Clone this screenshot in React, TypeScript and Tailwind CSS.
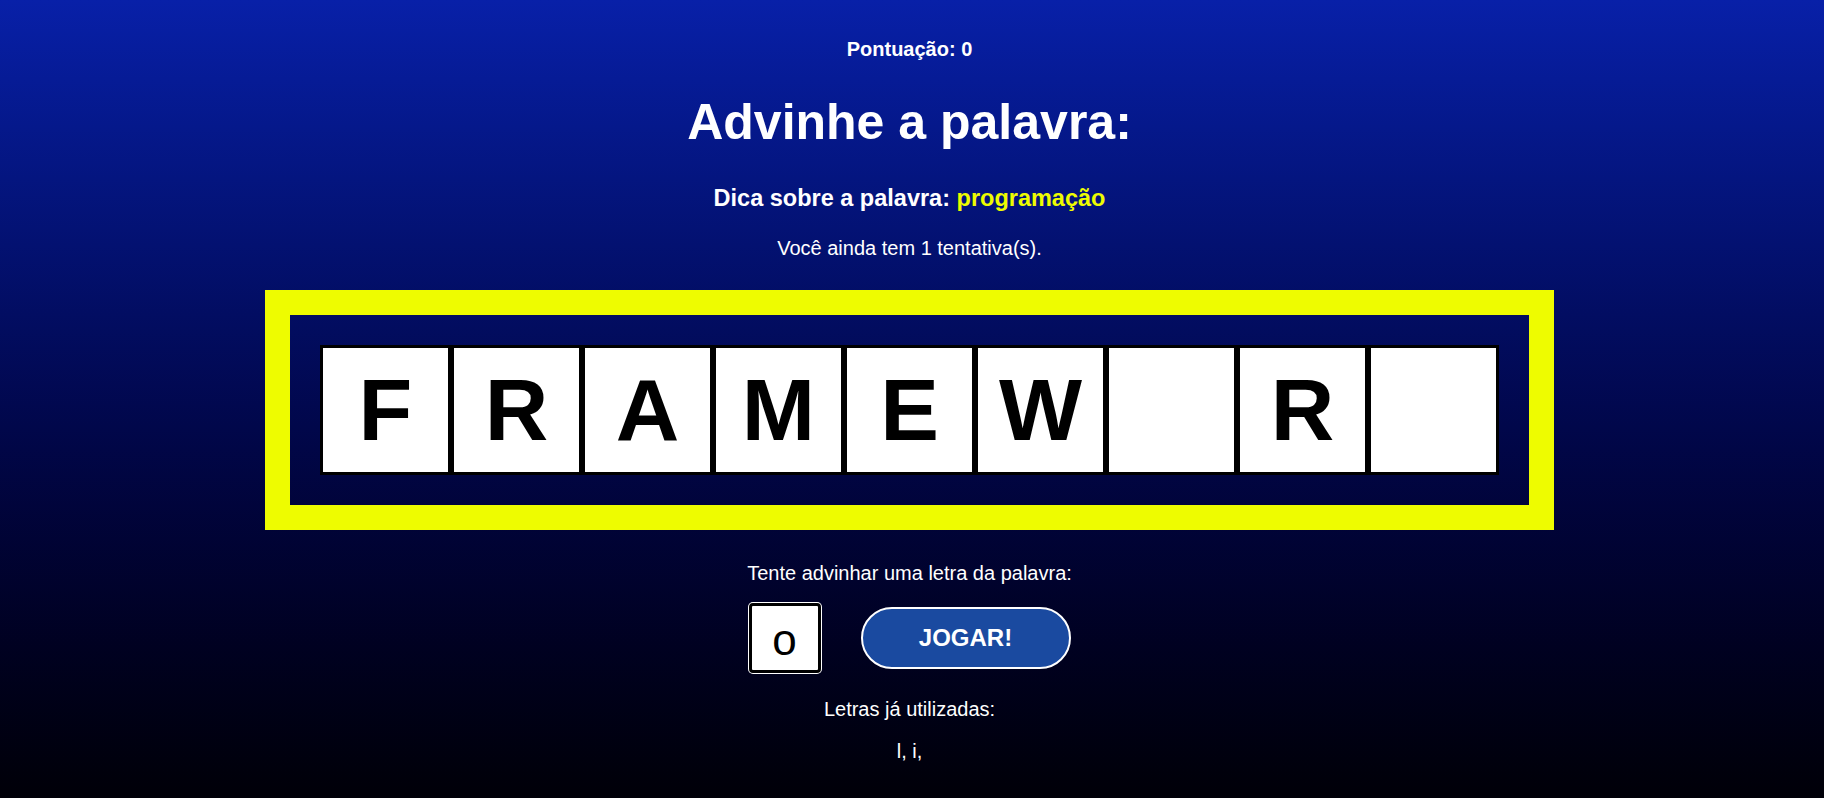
import { useState } from "react";

const word = ["F", "R", "A", "M", "E", "W", "", "R", ""];

export default function App() {
  const [guess, setGuess] = useState("o");
  const used = ["l", "i"];

  return (
    <div
      className="min-h-screen h-[798px] bg-linear-to-b from-[#0820a8] to-[#000008] text-white flex flex-col items-center pr-[5px] overflow-hidden"
      style={{ fontFamily: '"Liberation Sans", Arial, sans-serif' }}
    >
      {/* pontuação */}
      <p className="mt-[39px] text-[20px] leading-none font-bold">Pontuação: 0</p>

      <h1 className="mt-[38px] text-[50px] leading-none font-bold">Advinhe a palavra:</h1>

      <p className="mt-[40px] text-[23.5px] leading-none font-bold">
        Dica sobre a palavra: <span className="text-[#eefc00]">programação</span>
      </p>

      <p className="mt-[27px] text-[20px] leading-none">Você ainda tem 1 tentativa(s).</p>

      {/* quadro da palavra */}
      <div className="mt-[32px] border-[25px] border-[#eefc00] p-[30px]">
        <div className="flex">
          {word.map((letter, i) => (
            <div
              key={i}
              className="w-[131px] h-[130px] bg-white border-[3px] border-black flex items-center justify-center text-black text-[88px] font-bold leading-none"
            >
              {letter}
            </div>
          ))}
        </div>
      </div>

      <p className="mt-[33px] text-[20px] leading-none">Tente advinhar uma letra da palavra:</p>

      <div className="mt-[20px] flex items-center gap-[40px]">
        <input
          value={guess}
          maxLength={1}
          onChange={(e) => setGuess(e.target.value)}
          className="w-[72px] h-[70px] bg-white text-black text-center text-[44px] pt-[4px] border-[3px] border-black rounded-[4px] ring-1 ring-white outline-none"
          style={{ fontFamily: '"Liberation Sans", Arial, sans-serif' }}
        />
        <button className="w-[210px] h-[62px] rounded-full border-2 border-white bg-[#1a4aa0] text-white text-[24px] font-bold">
          JOGAR!
        </button>
      </div>

      <p className="mt-[26px] text-[20px] leading-none">Letras já utilizadas:</p>

      <p className="mt-[22px] text-[20px] leading-none">
        {used.map((l) => `${l}, `).join("")}
      </p>
    </div>
  );
}
